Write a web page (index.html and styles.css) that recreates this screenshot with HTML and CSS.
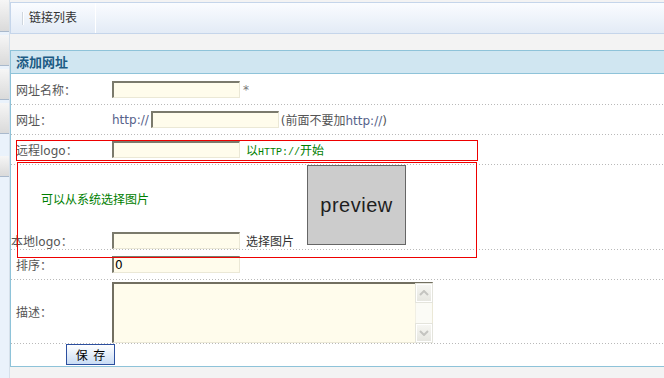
FILE: index.html
```html
<!DOCTYPE html>
<html lang="zh-CN">
<head>
  <meta charset="UTF-8">
  <title>添加网址</title>
  <link rel="stylesheet" href="styles.css">
</head>
<body>

<div class="side">
  <div class="side-tab first"></div>
  <div class="side-tab"></div>
  <div class="side-tab"></div>
  <div class="side-tab"></div>
  <div class="side-tab last"></div>
</div>

<div class="main">
  <div class="tabbar">
    <span class="tab-sep"></span>
    <a class="tab" href="#">链接列表</a>
  </div>

  <div class="panel">
    <div class="panel-head">添加网址</div>

    <form class="panel-body">
      <div class="row">
        <label class="label">网址名称：</label>
        <input class="field" type="text">
        <span class="star">*</span>
      </div>

      <div class="row">
        <label class="label">网址：</label>
        <span class="prefix">http://</span>
        <input class="field" type="text">
        <span class="note">(前面不要加<span class="latin">http://</span>)</span>
      </div>

      <div class="row">
        <label class="label">远程logo：</label>
        <input class="field" type="text">
        <span class="tip">以<span class="mono">HTTP://</span>开始</span>
      </div>

      <div class="row local">
        <div class="local-main">
          <div class="hint">可以从系统选择图片</div>
          <div class="local-line">
            <label class="label wide">本地logo：</label>
            <input class="field" type="text">
            <span class="pick">选择图片</span>
          </div>
        </div>
        <div class="preview">preview</div>
      </div>

      <div class="row">
        <label class="label">排序：</label>
        <input class="field" type="text" value="0">
      </div>

      <div class="row desc">
        <label class="label">描述：</label>
        <div class="textbox">
          <textarea class="textarea"></textarea>
          <div class="scroll">
            <div class="scroll-btn">
              <svg width="10" height="6" viewBox="0 0 10 6"><path d="M1 5 L5 1 L9 5" fill="none" stroke="#c4c4c0" stroke-width="2"/></svg>
            </div>
            <div class="scroll-btn">
              <svg width="10" height="6" viewBox="0 0 10 6"><path d="M1 1 L5 5 L9 1" fill="none" stroke="#c4c4c0" stroke-width="2"/></svg>
            </div>
          </div>
        </div>
      </div>

      <div class="actions">
        <button class="save" type="button">保 存</button>
      </div>

      
      <div class="outline remote-box"></div>
      <div class="outline local-box"></div>
    </form>
  </div>
</div>

</body>
</html>
```

FILE: styles.css
```css
body {
  margin: 0;
  display: flex;
  height: 378px;
  overflow: hidden;
  font-family: "DejaVu Sans", "Noto Sans CJK SC", sans-serif;
  font-size: 12px;
  color: #555;
  background: #f3f3f3;
}

/* Left strip */
.side {
  width: 9px;
  flex: none;
  background: #eaf2fb;
  border-right: 1px solid #d6e0ea;
}

.side-tab {
  height: 30px;
  margin-bottom: 3px;
  background: linear-gradient(#f6f6f6, #dadada);
  border-bottom: 1px solid #a9b9cc;
}

.side-tab.first {
  height: 31px;
}

.side-tab.last {
  margin-top: 22px;
  height: 20px;
}

/* Main column */
.main {
  flex: 1;
  min-width: 0;
  padding-top: 2px;
}

.tabbar {
  height: 30px;
  display: flex;
  align-items: center;
  border: 1px solid #c5d5ea;
  border-right: none;
  background: linear-gradient(#fafcff, #e3ebf6);
}

.tab-sep {
  width: 1px;
  height: 13px;
  margin-left: 11px;
  background: #cfd6de;
  box-shadow: 1px 0 0 #fff;
}

.tab {
  height: 30px;
  line-height: 30px;
  padding: 0 18px 0 6px;
  color: #333;
  text-decoration: none;
  border-right: 1px solid #fff;
}

.panel {
  margin-top: 16px;
  border: 1px solid #8ec3d9;
  border-right: none;
  background: #fff;
}

.panel-head {
  height: 22px;
  line-height: 22px;
  padding-left: 5px;
  background: #d0e6f1;
  border-bottom: 1px solid #8ec3d9;
  color: #1c5b84;
  font-family: "Noto Sans CJK SC", sans-serif;
  font-size: 13px;
  font-weight: bold;
}

.panel-body {
  position: relative;
  margin: 0;
  padding-top: 1px;
}

/* Rows */
.row {
  display: flex;
  align-items: center;
  height: 29px;
  padding: 0 0 1px 5px;
  background-image: linear-gradient(to right, #b9b9b9 1px, transparent 1px);
  background-size: 3px 1px;
  background-repeat: repeat-x;
  background-position: left bottom;
}

.label {
  width: 96px;
  flex: none;
}

.label.wide {
  width: 101px;
}

.field {
  box-sizing: border-box;
  width: 128px;
  height: 17px;
  margin: 0;
  padding: 0 1px;
  background: #fffcec;
  border-style: solid;
  border-width: 2px 1px 1px 2px;
  border-color: #7b7a6c #ebe8d6 #ebe8d6 #7b7a6c;
  font-family: "DejaVu Sans", "Noto Sans CJK SC", sans-serif;
  font-size: 12px;
  color: #000;
  outline: none;
}

.star {
  margin-left: 3px;
  color: #777;
}

.prefix {
  margin-right: 2px;
  color: #56628a;
}

.note {
  margin-left: 2px;
}

.latin {
  color: #56628a;
}

.tip {
  margin-left: 6px;
  color: #008000;
}

.mono {
  font-family: "Liberation Mono", monospace;
  font-size: 10px;
}

/* Local logo row */
.row.local {
  height: 84px;
  padding-left: 0;
  align-items: flex-start;
}

.local-main {
  width: 295px;
  height: 84px;
  display: flex;
  flex-direction: column;
  justify-content: space-between;
}

.hint {
  margin: 25px 0 0 30px;
  color: #008000;
}

.local-line {
  display: flex;
  align-items: center;
  height: 17px;
}

.pick {
  margin-left: 6px;
  color: #333;
}

.preview {
  box-sizing: border-box;
  width: 99px;
  height: 80px;
  margin-left: 1px;
  display: flex;
  align-items: center;
  justify-content: center;
  background: #cccccc;
  border: 1px solid #666;
  font-family: "Liberation Sans", Arial, sans-serif;
  font-size: 20px;
  letter-spacing: 0.5px;
  color: #1e1e1e;
}

/* Description */
.row.desc {
  height: 63px;
}

.textbox {
  box-sizing: border-box;
  display: flex;
  width: 321px;
  height: 61px;
  margin-top: 1px;
  background: #fffcec;
  border-style: solid;
  border-width: 2px 1px 1px 2px;
  border-color: #726f60 #ebe8d6 #ebe8d6 #726f60;
}

.textarea {
  flex: 1;
  margin: 0;
  border: none;
  padding: 1px;
  resize: none;
  background: transparent;
  outline: none;
}

.scroll {
  width: 16px;
  display: flex;
  flex-direction: column;
  justify-content: space-between;
  background: #fbfbf6;
  border-left: 1px solid #f1efe4;
}

.scroll-btn {
  height: 16px;
  display: flex;
  align-items: center;
  justify-content: center;
  background: linear-gradient(#f6f6f2, #e6e6e0);
  border: 1px solid #fff;
  box-shadow: 0 0 0 1px #e4e4dc;
}

/* Save button */
.actions {
  height: 22px;
  padding-left: 55px;
}

.save {
  width: 49px;
  height: 21px;
  margin: 0;
  padding: 0;
  border: 1px solid #2c4f9f;
  background: linear-gradient(#ffffff, #c9dcf4);
  font-family: "Noto Sans CJK SC", sans-serif;
  font-size: 12px;
  word-spacing: 3px;
  color: #000;
  cursor: pointer;
}

/* Red outlines laid over the logo rows */
.outline {
  position: absolute;
  box-sizing: border-box;
  border: 1px solid #ee0000;
  pointer-events: none;
}

.remote-box {
  left: 5px;
  top: 66px;
  width: 462px;
  height: 21px;
}

.local-box {
  left: 6px;
  top: 88px;
  width: 460px;
  height: 96px;
}
```
